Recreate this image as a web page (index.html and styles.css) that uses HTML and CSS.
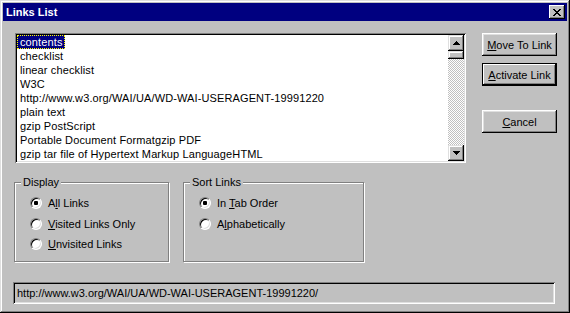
FILE: index.html
```html
<!DOCTYPE html>
<html lang="en">

<head>
    <meta charset="UTF-8">
    <title>Links List</title>
    <link rel="stylesheet" href="styles.css">
</head>

<body>
    <div class="window">
        <div class="titlebar">
            <span class="title">Links List</span>
            <button class="close">
                <svg width="8" height="7" viewBox="0 0 8 7"><path d="M0 0h2v1h-2z M6 0h2v1h-2z M1 1h2v1h-2z M5 1h2v1h-2z M2 2h4v1h-4z M3 3h2v1h-2z M2 4h4v1h-4z M1 5h2v1h-2z M5 5h2v1h-2z M0 6h2v1h-2z M6 6h2v1h-2z" fill="#000"/></svg>
            </button>
        </div>

        <div class="body">
            <div class="top">
                <div class="listbox">
                    <ul class="items">
                        <li><span class="sel">contents</span></li>
                        <li><span>checklist</span></li>
                        <li><span>linear checklist</span></li>
                        <li><span>W3C</span></li>
                        <li><span>http://www.w3.org/WAI/UA/WD-WAI-USERAGENT-19991220</span></li>
                        <li><span>plain text</span></li>
                        <li><span>gzip PostScript</span></li>
                        <li><span>Portable Document Formatgzip PDF</span></li>
                        <li><span>gzip tar file of Hypertext Markup LanguageHTML</span></li>
                    </ul>
                    <div class="scrollbar">
                        <div class="sb-btn">
                            <svg width="7" height="4" viewBox="0 0 7 4"><path d="M3 0h1v1h-1z M2 1h3v1h-3z M1 2h5v1h-5z M0 3h7v1h-7z" fill="#000"/></svg>
                        </div>
                        <div class="sb-thumb"></div>
                        <div class="sb-track"></div>
                        <div class="sb-btn">
                            <svg width="7" height="4" viewBox="0 0 7 4"><path d="M0 0h7v1h-7z M1 1h5v1h-5z M2 2h3v1h-3z M3 3h1v1h-1z" fill="#000"/></svg>
                        </div>
                    </div>
                </div>

                <div class="actions">
                    <button class="btn"><u>M</u>ove To Link</button>
                    <button class="btn default"><u>A</u>ctivate Link</button>
                    <button class="btn cancel"><u>C</u>ancel</button>
                </div>
            </div>

            <div class="groups">
                <div class="group display">
                    <div class="group-label">Display</div>
                    <div class="opt"><span class="radio on"></span><span>A<u>l</u>l Links</span></div>
                    <div class="opt"><span class="radio"></span><span><u>V</u>isited Links Only</span></div>
                    <div class="opt"><span class="radio"></span><span><u>U</u>nvisited Links</span></div>
                </div>
                <div class="group sort">
                    <div class="group-label">Sort Links</div>
                    <div class="opt"><span class="radio on"></span><span>In <u>T</u>ab Order</span></div>
                    <div class="opt"><span class="radio"></span><span>A<u>l</u>phabetically</span></div>
                </div>
            </div>

            <div class="status">http://www.w3.org/WAI/UA/WD-WAI-USERAGENT-19991220/</div>
        </div>
    </div>
</body>

</html>
```

FILE: styles.css
```css
* {
    box-sizing: border-box;
}

body {
    margin: 0;
    background-color: #c0c0c0;
    font-family: "Liberation Sans", Arial, sans-serif;
    font-size: 11px;
    color: #000;
}

u {
    text-decoration: underline;
    text-underline-offset: 1px;
}

.window {
    width: 570px;
    height: 313px;
    padding: 3px;
    background-color: #c0c0c0;
    box-shadow: inset -1px -1px #000, inset 1px 1px #dfdfdf, inset -2px -2px #808080, inset 2px 2px #fff;
}

.titlebar {
    height: 18px;
    background-color: #000080;
    display: flex;
    align-items: center;
    justify-content: space-between;
    padding: 0 2px 0 3px;
    color: #fff;
    font-weight: bold;
}

.close {
    width: 16px;
    height: 14px;
    padding: 0;
    border: none;
    background-color: #c0c0c0;
    display: flex;
    justify-content: center;
    align-items: center;
    box-shadow: inset -1px -1px #000, inset 1px 1px #fff, inset -2px -2px #808080;
}

.body {
    padding: 12px 10px 0 12px;
}

.top {
    display: flex;
    align-items: flex-start;
}

/* list box */
.listbox {
    width: 451px;
    height: 130px;
    padding: 2px;
    background-color: #fff;
    display: flex;
    box-shadow: inset 1px 1px #808080, inset -1px -1px #fff, inset 2px 2px #000, inset -2px -2px #dfdfdf;
}

.items {
    flex: 1;
    list-style: none;
    margin: 0;
    padding: 0;
    overflow: hidden;
    letter-spacing: 0.12px;
}

.items li {
    height: 14px;
    line-height: 14px;
    white-space: nowrap;
}

.items span {
    display: inline-block;
    height: 14px;
    padding: 0 2px 0 3px;
}

.items .sel {
    background-color: #000080;
    color: #fff;
    outline: 1px dotted #ffff00;
    outline-offset: -1px;
}

.scrollbar {
    width: 16px;
    display: flex;
    flex-direction: column;
}

.sb-btn,
.sb-thumb {
    background-color: #c0c0c0;
    box-shadow: inset -1px -1px #000, inset 1px 1px #dfdfdf, inset -2px -2px #808080, inset 2px 2px #fff;
}

.sb-btn {
    height: 16px;
    display: flex;
    justify-content: center;
    align-items: center;
}

.sb-thumb {
    height: 8px;
}

.sb-track {
    flex: 1;
    background: repeating-conic-gradient(#c0c0c0 0 25%, #fff 0 50%) 0 0 / 2px 2px;
}

/* buttons on the right */
.actions {
    display: flex;
    flex-direction: column;
    margin-left: 16px;
}

.btn {
    width: 75px;
    height: 23px;
    padding: 0;
    border: none;
    background-color: #c0c0c0;
    font-family: inherit;
    font-size: 11px;
    color: #000;
    box-shadow: inset -1px -1px #000, inset 1px 1px #fff, inset -2px -2px #808080, inset 2px 2px #dfdfdf;
}

.default {
    margin-top: 7px;
    box-shadow: inset 0 0 0 1px #000, inset -2px -2px #000, inset 2px 2px #fff, inset -3px -3px #808080;
}

.cancel {
    margin-top: 24px;
}

/* option groups */
.groups {
    display: flex;
    gap: 14px;
    margin-top: 19px;
    margin-left: -1px;
}

.group {
    height: 80px;
    border: 1px solid #808080;
    box-shadow: inset 1px 1px #fff, 1px 1px #fff;
}

.display {
    width: 155px;
}

.sort {
    width: 181px;
}

.group-label {
    width: fit-content;
    height: 13px;
    line-height: 13px;
    margin: -7px 0 4px 6px;
    padding: 0 2px;
    background-color: #c0c0c0;
}

.opt {
    height: 20.5px;
    display: flex;
    align-items: center;
    gap: 6px;
    padding-left: 15px;
}

.radio {
    width: 12px;
    height: 12px;
    border-radius: 50%;
    border: 1px solid;
    border-color: #808080 #fff #fff #808080;
    background-color: #fff;
    box-shadow: inset 1px 1px #000, inset -1px -1px #dfdfdf;
    display: flex;
    justify-content: center;
    align-items: center;
}

.radio.on::after {
    content: "";
    width: 4px;
    height: 4px;
    border-radius: 1px;
    background-color: #000;
}

/* status line */
.status {
    width: 542px;
    height: 22px;
    margin: 20px 0 0 -2px;
    padding-left: 4px;
    line-height: 22px;
    white-space: nowrap;
    box-shadow: inset 1px 1px #808080, inset -1px -1px #fff, inset 2px 2px #000, inset -2px -2px #dfdfdf;
}
```
